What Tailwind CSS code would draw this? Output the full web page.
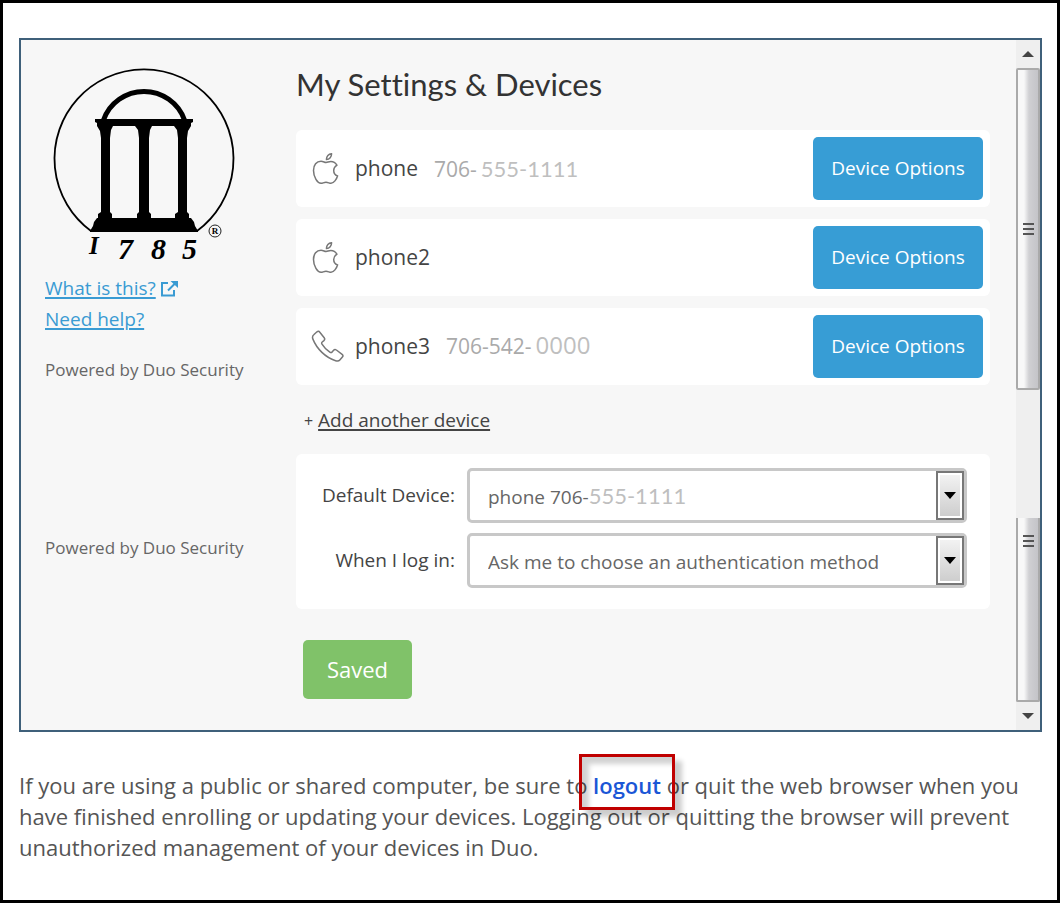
<!DOCTYPE html>
<html lang="en">
<head>
  <meta charset="UTF-8">
  <meta name="viewport" content="width=device-width, initial-scale=1.0">
  <title>My Settings &amp; Devices</title>
  <script src="https://cdn.jsdelivr.net/npm/@tailwindcss/browser@4"></script>
</head>
<body class="min-h-screen border-3 border-black bg-white pt-[35px] pr-[15px] pb-8 pl-4 font-['Open_Sans',sans-serif] text-[#444]">

<!-- Shared icons -->
<svg class="hidden" aria-hidden="true">
  <symbol id="apple" viewBox="0 0 28 32">
    <path d="M14 9.500c-1.800-.3-3-1.200-5-1.200C4.500 8.300 1.500 12 1.500 17.500 1.500 24 5.500 30.300 9 30.300c1.800 0 2.800-1 5-1s3.200 1 5 1c2.800 0 5.600-4 6.500-7.300-2.400-1-3.800-3-3.800-5.500 0-2.200 1-4 3.200-5.400-1.500-2.400-3.800-3.600-6-3.600-2 0-3.100.8-4.900 1zM14.500 6.500c-.2-3 2.200-5.500 5-5.700.2 2.800-2 5.600-5 5.700z"/>
  </symbol>
  <symbol id="handset" viewBox="0 0 34 34">
    <path d="M3 4.500 6 1.800c1-.8 2-.6 2.800.4l4.400 5.600c.8 1 .6 2-.3 2.800l-1.700 1.400c-.7.6-.7 1.300-.2 2.200 2 3.300 4.300 5.600 7.800 7.900.9.6 1.700.5 2.300-.2l1.500-1.700c.8-.9 1.800-1 2.800-.2l5.700 4.300c1 .8 1.100 1.800.3 2.800l-2.600 3c-.9 1-2.500 1.200-4.200.6C14.500 27.500 5.800 19 1.800 8.900 1.200 7.200 1.600 5.600 3 4.500z"/>
  </symbol>
</svg>

<div class="flex border-2 border-[#3f607a] bg-[#f7f7f7]">

  <!-- Sidebar -->
  <aside class="w-[275px] shrink-0 pt-5 pl-6">
    <svg class="h-[210px] w-[210px] -ml-[5px]" viewBox="0 0 210 210" role="img" aria-label="1785 arch logo">
      <path d="M51 171A89.500 89.500 0 1 1 157 171" fill="none" stroke="#000" stroke-width="1.800"/>
      <path d="M63.500 60A43 43 0 0 1 144.500 60" fill="none" stroke="#000" stroke-width="5"/>
      <path d="M55 59h98v3l-2 1v3l-3 5-1 7v74l2 2v4h2l3 4 1 4 3 5v1H50v-1l3-5 1-4 3-4h1v-4l3-2V78l-1-7-3-5v-3l-2-1zM73 66l-2 4-1 8v74l2 2v4h25v-4l2-2V78l-1-8-3-4zM112 66l-2 4-1 8v74l2 2v4h24v-4l3-2V78l-1-8-3-4z" fill="#000" fill-rule="evenodd"/>
      <g class="font-['Liberation_Serif',serif] font-bold italic" font-size="30">
        <text x="49" y="194" font-size="25">I</text>
        <text x="78" y="199">7</text>
        <text x="111" y="199">8</text>
        <text x="142" y="199">5</text>
      </g>
      <circle cx="175" cy="171" r="6" fill="none" stroke="#222" stroke-width="1"/>
      <text x="175" y="174" font-size="9" font-weight="bold" text-anchor="middle" class="font-['Liberation_Serif',serif]">R</text>
    </svg>
    <div class="mt-[3px] flex flex-col items-start text-[19px] leading-[31px] text-[#3a9bd3]">
      <a href="#" class="flex items-center gap-1"><span class="underline decoration-2 underline-offset-2">What is this?</span>
        <svg class="h-4 w-[18px]" viewBox="0 0 18 16" fill="none" stroke="currentColor" stroke-width="2" aria-hidden="true">
          <path d="M8 2H2v12.500h12V9M8 9.500l7-7"/>
          <path d="M10.500 0H18v7z" fill="currentColor" stroke="none"/>
        </svg>
      </a>
      <a href="#" class="underline decoration-2 underline-offset-2">Need help?</a>
    </div>
    <p class="mt-[22px] text-[17px] leading-[26px] text-[#666]">Powered by Duo Security</p>
    <p class="mt-[152px] text-[17px] leading-[26px] text-[#666]">Powered by Duo Security</p>
  </aside>

  <!-- Settings -->
  <main class="min-w-0 flex-1 pt-6 pr-[26px] pb-[31px]">
    <h1 class="font-[Lato,sans-serif] text-[31px] leading-10 text-[#333] [font-variant-ligatures:none]">My Settings &amp; Devices</h1>

    <ul class="mt-[26px] flex flex-col gap-3 text-[21px]">
      <li class="flex items-center rounded-md bg-white py-[7px] pr-[7px] pl-4">
        <svg class="h-8 w-7 fill-none stroke-[#777] stroke-[1.5]" aria-hidden="true"><use href="#apple"/></svg>
        <span class="ml-[15px]">phone</span>
        <span class="ml-4 text-[#aaa]">706-<span class="ml-1 font-[Lato,sans-serif] text-[22px] text-[#bfbfbf]">555-1111</span></span>
        <button type="button" class="ml-auto h-[63px] w-[170px] rounded-[5px] bg-[#379dd5] text-[19px] text-white">Device Options</button>
      </li>
      <li class="flex items-center rounded-md bg-white py-[7px] pr-[7px] pl-4">
        <svg class="h-8 w-7 fill-none stroke-[#777] stroke-[1.5]" aria-hidden="true"><use href="#apple"/></svg>
        <span class="ml-[15px]">phone2</span>
        <button type="button" class="ml-auto h-[63px] w-[170px] rounded-[5px] bg-[#379dd5] text-[19px] text-white">Device Options</button>
      </li>
      <li class="flex items-center rounded-md bg-white py-[7px] pr-[7px] pl-[15px]">
        <svg class="h-[34px] w-[34px] fill-none stroke-[#777] stroke-[1.5]" aria-hidden="true"><use href="#handset"/></svg>
        <span class="ml-2.5">phone3</span>
        <span class="ml-4 text-[#aaa]">706-542-<span class="ml-1 text-2xl leading-7 font-medium text-[#bfbfbf]">0000</span></span>
        <button type="button" class="ml-auto h-[63px] w-[170px] rounded-[5px] bg-[#379dd5] text-[19px] text-white">Device Options</button>
      </li>
    </ul>

    <p class="mt-5 pl-2 text-[19px] leading-[30px]"><span class="text-base">+</span> <a href="#" class="underline decoration-2 underline-offset-2">Add another device</a></p>

    <form>
      <div class="mt-[19px] grid grid-cols-[159px_1fr] items-center gap-x-3 gap-y-2.5 rounded-md bg-white pt-3.5 pr-[23px] pb-[21px] text-[19px]">
        <label for="device" class="text-right">Default Device:</label>
        <div class="grid rounded-[5px] border-3 border-[#c8c8c8]">
          <select id="device" class="col-start-1 row-start-1 h-[49px] w-full appearance-none bg-transparent text-transparent">
            <option>phone 706-555-1111</option>
          </select>
          <span class="pointer-events-none col-start-1 row-start-1 self-center pl-[18px] text-[#666]" aria-hidden="true">phone 706-<span class="font-[Lato,sans-serif] text-[22px] text-[#bfbfbf]">555-1111</span></span>
          <span class="pointer-events-none col-start-1 row-start-1 flex w-7 items-center justify-center justify-self-end border-2 border-[#777] bg-linear-to-b from-[#f4f4f4] to-[#ccc] inset-ring-2 inset-ring-white" aria-hidden="true">
            <svg class="h-[7px] w-3" viewBox="0 0 12 7"><path d="M0 0h12L6 7z"/></svg>
          </span>
        </div>
        <label for="login" class="text-right">When I log in:</label>
        <div class="grid rounded-[5px] border-3 border-[#c8c8c8]">
          <select id="login" class="col-start-1 row-start-1 h-[49px] w-full appearance-none bg-transparent pt-1 pl-[18px] text-[#666]">
            <option>Ask me to choose an authentication method</option>
          </select>
          <span class="pointer-events-none col-start-1 row-start-1 flex w-7 items-center justify-center justify-self-end border-2 border-[#777] bg-linear-to-b from-[#f4f4f4] to-[#ccc] inset-ring-2 inset-ring-white" aria-hidden="true">
            <svg class="h-[7px] w-3" viewBox="0 0 12 7"><path d="M0 0h12L6 7z"/></svg>
          </span>
        </div>
      </div>
      <button type="button" class="mt-[31px] ml-[7px] h-[59px] w-[109px] rounded-[5px] bg-[#80c269] text-[22px] text-white">Saved</button>
    </form>
  </main>

  <!-- Scrollbar -->
  <div class="flex w-6 shrink-0 flex-col bg-[#efefef]" aria-hidden="true">
    <div class="flex h-7 items-center justify-center">
      <svg class="h-1.5 w-3" viewBox="0 0 12 6"><path d="M0 6h12L6 0z" fill="#444"/></svg>
    </div>
    <div class="flex h-[322px] items-center rounded-xs border-2 border-[#aaa] bg-linear-to-r from-[#f8f8f8] from-30% via-[#d0d0d3] via-55% to-[#c4c4c8] pl-1">
      <svg class="h-3.5 w-3.5" viewBox="0 0 14 14" stroke="#555" stroke-width="2"><path d="M1 2h11M1 7h11M1 12h11"/></svg>
    </div>
    <div class="h-32"></div>
    <div class="flex flex-1 rounded-b-xs border-2 border-t-0 border-[#aaa] bg-linear-to-r from-[#f8f8f8] from-30% via-[#d0d0d3] via-55% to-[#c4c4c8] pt-4 pl-1">
      <svg class="h-3.5 w-3.5" viewBox="0 0 14 14" stroke="#555" stroke-width="2"><path d="M1 2h11M1 7h11M1 12h11"/></svg>
    </div>
    <div class="flex h-7 items-center justify-center">
      <svg class="h-1.5 w-3" viewBox="0 0 12 6"><path d="M0 0h12L6 6z" fill="#444"/></svg>
    </div>
  </div>
</div>

<p class="mt-[38px] text-[22px] leading-[31px] text-[#555]">
  If you are using a public or shared computer, be sure to
  <a href="#" class="relative font-semibold text-[#1a56d6]">logout<span class="absolute -inset-x-3.5 -top-4 -bottom-2.5 border-3 border-[#c00000] shadow-[7px_7px_5px_rgba(0,0,0,0.2),inset_7px_7px_5px_rgba(0,0,0,0.18)]"></span></a>
  or quit the web browser when you have finished enrolling or updating your devices. Logging out or quitting the browser will prevent unauthorized management of your devices in Duo.
</p>

</body>
</html>
